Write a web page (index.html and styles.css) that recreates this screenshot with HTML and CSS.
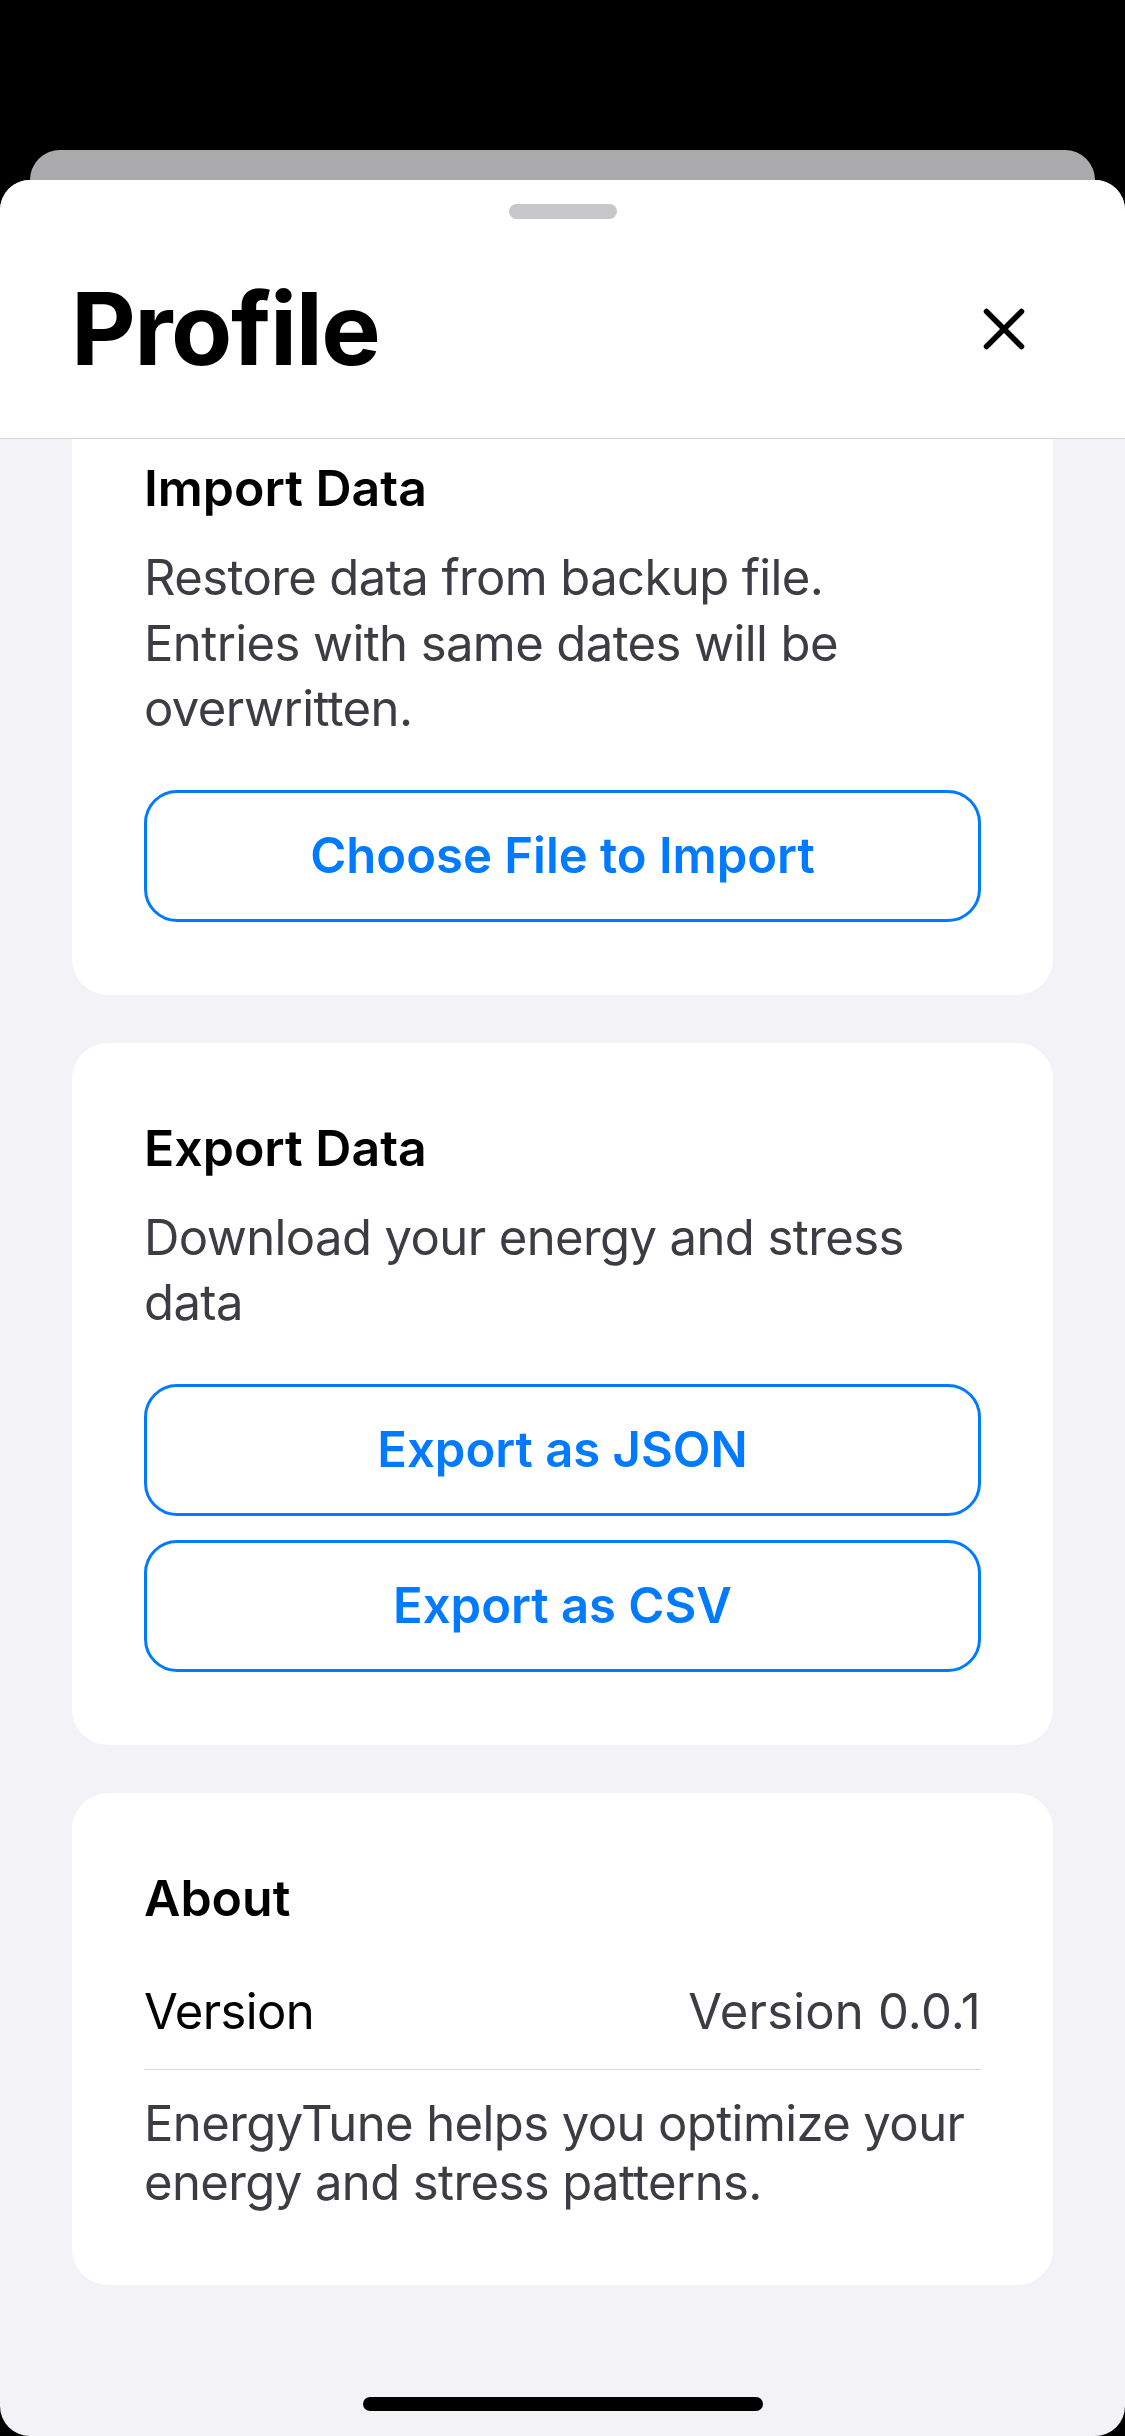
FILE: index.html
```html
<!DOCTYPE html>
<html lang="en">
<head>
<meta charset="utf-8">
<title>Profile</title>
<link rel="stylesheet" href="styles.css">
</head>
<body>
<div class="screen">
  <div class="backcard"></div>
  <div class="sheet">
    <header class="sheet-header">
      <div class="grabber"></div>
      <div class="title-row">
        <h1 class="title">Profile</h1>
        <button class="close" aria-label="Close">
          <svg width="60" height="60" viewBox="0 0 60 60"><path d="M12.5 12.5 L47.5 47.5 M47.5 12.5 L12.5 47.5" stroke="#000" stroke-width="5.5" stroke-linecap="round" fill="none"/></svg>
        </button>
      </div>
    </header>
    <main class="content">
      <div class="list">
        <section class="card">
          <h2 class="card-title">Import Data</h2>
          <p class="card-desc">Restore data from backup file. Entries with same dates will be overwritten.</p>
          <div class="btns">
            <button class="btn">Choose File to Import</button>
          </div>
        </section>
        <section class="card">
          <h2 class="card-title">Export Data</h2>
          <p class="card-desc">Download your energy and stress data</p>
          <div class="btns">
            <button class="btn">Export as JSON</button>
            <button class="btn">Export as CSV</button>
          </div>
        </section>
        <section class="card">
          <h2 class="card-title">About</h2>
          <div class="row">
            <span class="row-label">Version</span>
            <span class="row-value">Version 0.0.1</span>
          </div>
          <p class="about-text">EnergyTune helps you optimize your energy and stress patterns.</p>
        </section>
      </div>
    </main>
    <div class="home-indicator"></div>
  </div>
</div>
</body>
</html>
```
FILE: styles.css
```css
* { box-sizing: border-box; }
html, body {
  margin: 0;
  padding: 0;
  background: #000;
}
body {
  width: 1125px;
  height: 2436px;
  overflow: hidden;
  font-family: Inter, "Noto Sans", "Liberation Sans", sans-serif;
  -webkit-font-smoothing: antialiased;
}
.screen {
  height: 2436px;
  padding-top: 150px;
  display: flex;
  flex-direction: column;
}
.backcard {
  height: 30px;
  margin: 0 30px;
  background: #aaaaac;
  border-radius: 30px 30px 0 0;
  flex: none;
}
.sheet {
  flex: 1;
  position: relative;
  background: #f2f2f7;
  border-radius: 30px;
  overflow: hidden;
  display: flex;
  flex-direction: column;
}
.sheet-header {
  flex: none;
  height: 259px;
  background: #fff;
  border-bottom: 1px solid #d6d6da;
  display: flex;
  flex-direction: column;
  align-items: center;
  padding-top: 24px;
}
.grabber {
  width: 108px;
  height: 15px;
  border-radius: 8px;
  background: #c6c6cb;
}
.title-row {
  align-self: stretch;
  margin-top: 50px;
  padding: 0 91px 0 71px;
  display: flex;
  align-items: center;
  justify-content: space-between;
  height: 120px;
}
.title {
  margin: 0;
  font-size: 100px;
  line-height: 120px;
  font-weight: 700;
  color: #000;
  letter-spacing: -1.5px;
}
.close {
  border: 0;
  background: none;
  padding: 0;
  width: 60px;
  height: 60px;
  display: block;
}
.close svg { display: block; }
.content {
  flex: 1;
  overflow: hidden;
  padding: 0 72px;
}
.list {
  margin-top: -56px;
  display: flex;
  flex-direction: column;
  gap: 48px;
}
.card {
  background: #fff;
  border-radius: 36px;
  padding: 72px 72px 73px;
}
.card-title {
  margin: 0;
  font-size: 50px;
  line-height: 66px;
  font-weight: 600;
  color: #000;
}
.card-desc {
  margin: 24px 0 0;
  font-size: 49px;
  line-height: 65.5px;
  font-weight: 400;
  color: #3c3c43;
  letter-spacing: -0.6px;
}
.btns {
  margin-top: 48px;
  display: flex;
  flex-direction: column;
  gap: 24px;
}
.btn {
  height: 132px;
  border: 3px solid #007aff;
  border-radius: 33px;
  background: #fff;
  color: #007aff;
  font-family: inherit;
  font-size: 49px;
  font-weight: 600;
  display: flex;
  align-items: center;
  justify-content: center;
  padding: 0;
}
.row {
  margin-top: 48px;
  padding-bottom: 24px;
  border-bottom: 1px solid #d9d9dc;
  display: flex;
  justify-content: space-between;
  font-size: 49px;
  line-height: 66px;
}
.row-label { color: #000; letter-spacing: -0.6px; }
.row-value { color: #3c3c43; letter-spacing: 0.2px; }
.about-text {
  margin: 24px 0 0;
  font-size: 49px;
  line-height: 59px;
  color: #3c3c43;
  letter-spacing: -0.6px;
}
.home-indicator {
  position: absolute;
  left: 50%;
  bottom: 25px;
  width: 400px;
  height: 14px;
  margin-left: -200px;
  border-radius: 7px;
  background: #000;
}
```
